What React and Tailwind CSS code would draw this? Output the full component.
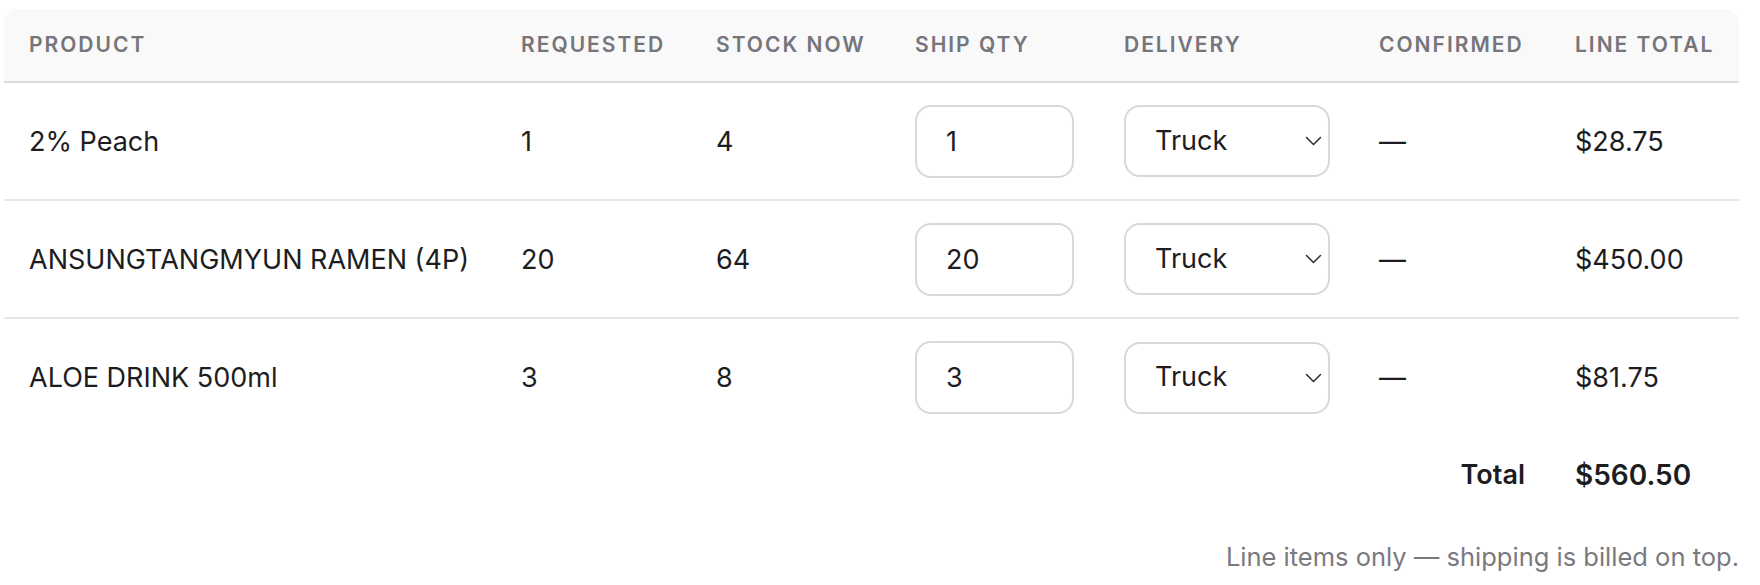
import React from 'react';

// Lines on the order
const items = [
  { name: '2% Peach', requested: 1, stock: 4, ship: 1, total: '$28.75' },
  { name: 'ANSUNGTANGMYUN RAMEN (4P)', requested: 20, stock: 64, ship: 20, total: '$450.00' },
  { name: 'ALOE DRINK 500ml', requested: 3, stock: 8, ship: 3, total: '$81.75' },
];

const headers = ['Product', 'Requested', 'Stock now', 'Ship qty', 'Delivery', 'Confirmed', 'Line total'];

const Chevron = () => (
  <svg width="17" height="10" viewBox="0 0 17 10" fill="none" className="pointer-events-none absolute right-[8px] top-1/2 -translate-y-1/2">
    <path d="M1.5 1.5 L8.5 8.5 L15.5 1.5" stroke="#2c2c2e" strokeWidth="1.5" strokeLinecap="round" strokeLinejoin="round" />
  </svg>
);

const App = () => {
  return (
    <div className="min-h-[585px] bg-white pl-[4px] pr-[21px] pt-[9px] text-[#1d1d1f] font-['Inter','Liberation_Sans',sans-serif]">
      <table className="w-[1735px] table-fixed border-collapse">
        <colgroup>
          <col className="w-[492px]" />
          <col className="w-[195px]" />
          <col className="w-[199px]" />
          <col className="w-[209px]" />
          <col className="w-[255px]" />
          <col className="w-[196px]" />
          <col className="w-[189px]" />
        </colgroup>
        <thead>
          <tr className="h-[73px] bg-[#f9f9fa] border-b-2 border-[#dcdadc]">
            {headers.map((h, i) => (
              <th
                key={h}
                className={`whitespace-nowrap px-[25px] text-left align-middle text-[21px] font-semibold uppercase tracking-[0.095em] text-[#76757a] ${i === 0 ? 'rounded-tl-[14px]' : ''} ${i === headers.length - 1 ? 'rounded-tr-[14px]' : ''}`}
              >
                {h}
              </th>
            ))}
          </tr>
        </thead>
        <tbody className="text-[27px]">
          {items.map((item, idx) => (
            <tr key={item.name} className={`h-[118px] ${idx < items.length - 1 ? 'border-b-2 border-[#e6e6e8]' : ''}`}>
              <td className="px-[25px] pt-[2px] align-middle">{item.name}</td>
              <td className="px-[25px] pt-[2px] align-middle">{item.requested}</td>
              <td className="px-[25px] pt-[2px] align-middle">{item.stock}</td>
              <td className="px-[25px] align-middle">
                <input
                  type="text"
                  defaultValue={item.ship}
                  className="h-[73px] w-[159px] rounded-[16px] border-2 border-[#d8d8da] bg-white px-[29px] text-[27px] text-[#1d1d1f] outline-none"
                />
              </td>
              <td className="px-[25px] align-middle">
                <div className="relative w-[206px]">
                  <select
                    defaultValue="Truck"
                    className="h-[72px] w-[206px] appearance-none rounded-[16px] border-2 border-[#d8d8da] bg-white pl-[29px] text-[27px] text-[#1d1d1f] outline-none"
                  >
                    <option>Truck</option>
                    <option>Pickup</option>
                  </select>
                  <Chevron />
                </div>
              </td>
              <td className="px-[25px] pt-[2px] align-middle">—</td>
              <td className="px-[25px] pt-[2px] align-middle">{item.total}</td>
            </tr>
          ))}
          <tr className="h-[78px]">
            <td colSpan={6} className="px-[25px] text-right align-middle text-[27px] font-semibold">Total</td>
            <td className="px-[25px] align-middle text-[28px] font-semibold">$560.50</td>
          </tr>
        </tbody>
      </table>
      <p className="mt-[24px] w-[1735px] text-right text-[25.5px] text-[#7a797e]">
        Line items only — shipping is billed on top.
      </p>
    </div>
  );
};

export default App;
